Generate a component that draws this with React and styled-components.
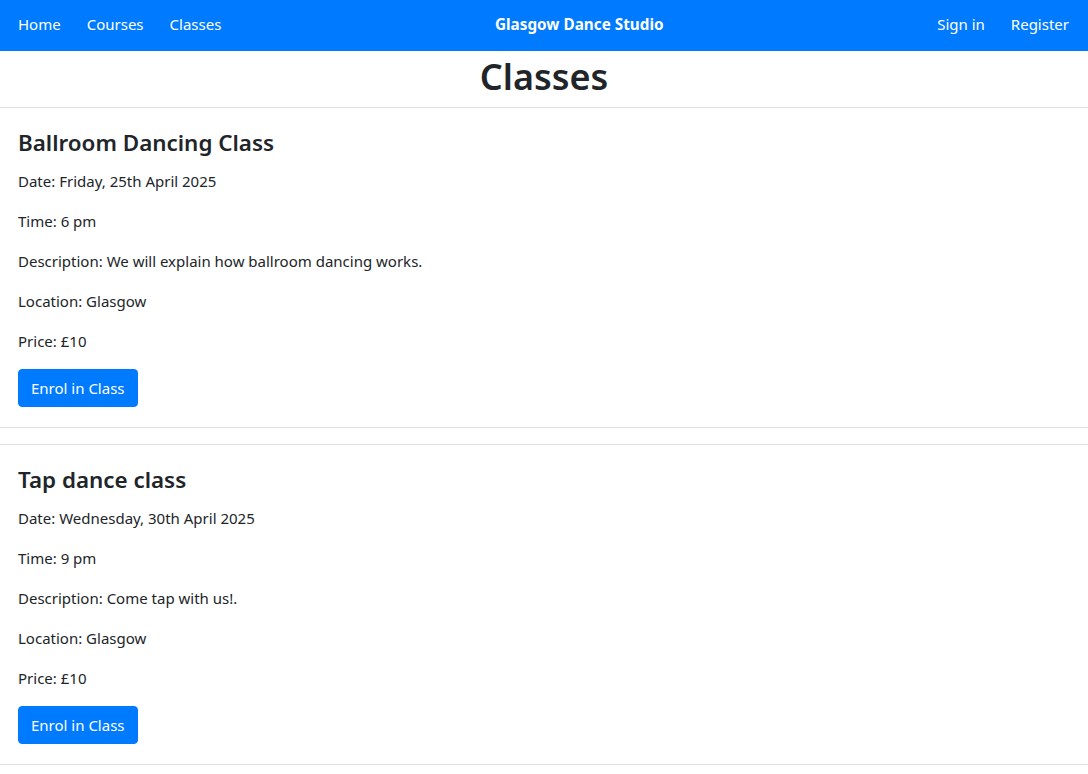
import React from 'react';
import styled, { createGlobalStyle } from 'styled-components';

const GlobalStyle = createGlobalStyle`
  body {
    margin: 0;
    font-family: "Segoe UI", "Noto Sans", "Liberation Sans", sans-serif;
    font-size: 15px;
    line-height: 24px;
    color: #212529;
    background: #fff;
  }
  * { box-sizing: border-box; }
`;

const Navbar = styled.nav`
  height: 51px;
  background-color: #007bff;
  display: flex;
  align-items: center;
  justify-content: space-between;
  padding: 0 11px 3px 10px;
`;

const NavGroup = styled.div`
  display: flex;
  align-items: center;
  gap: 10px;
`;

const NavLink = styled.a`
  color: #fff;
  text-decoration: none;
  padding: 8px 8px;
  font-size: 15px;
  cursor: pointer;
`;

const Brand = styled.a`
  color: #fff;
  font-weight: 700;
  font-size: 15.3px;
  text-decoration: none;
`;

const Title = styled.h1`
  margin: 0;
  padding: 2px 0 6px;
  text-align: center;
  font-size: 36px;
  font-weight: 600;
  line-height: 48px;
`;

const ClassCard = styled.section`
  border-top: 1px solid #dee2e6;
  border-bottom: 1px solid #dee2e6;
  padding: 21px 18px 20px;
  margin-bottom: 16px;
`;

const ClassName = styled.h3`
  margin: 0 0 11px;
  font-size: 22.4px;
  font-weight: 600;
  line-height: 28.8px;
`;

const Detail = styled.p`
  margin: 0 0 16px;
`;

const Button = styled.button`
  font-family: inherit;
  font-size: 15px;
  line-height: 24px;
  padding: 6px 12px;
  color: #fff;
  background-color: #007bff;
  border: 1px solid #007bff;
  border-radius: 4px;
  cursor: pointer;
`;

const classes = [
  {
    name: 'Ballroom Dancing Class',
    date: 'Friday, 25th April 2025',
    time: '6 pm',
    description: 'We will explain how ballroom dancing works.',
    location: 'Glasgow',
    price: '£10',
  },
  {
    name: 'Tap dance class',
    date: 'Wednesday, 30th April 2025',
    time: '9 pm',
    description: 'Come tap with us!.',
    location: 'Glasgow',
    price: '£10',
  },
];

export default function App() {
  return (
    <>
      <GlobalStyle />
      <Navbar>
        <NavGroup>
          <NavLink>Home</NavLink>
          <NavLink>Courses</NavLink>
          <NavLink>Classes</NavLink>
        </NavGroup>
        <Brand>Glasgow Dance Studio</Brand>
        <NavGroup>
          <NavLink>Sign in</NavLink>
          <NavLink>Register</NavLink>
        </NavGroup>
      </Navbar>
      <Title>Classes</Title>
      {classes.map((c) => (
        <ClassCard key={c.name}>
          <ClassName>{c.name}</ClassName>
          <Detail>Date: {c.date}</Detail>
          <Detail>Time: {c.time}</Detail>
          <Detail>Description: {c.description}</Detail>
          <Detail>Location: {c.location}</Detail>
          <Detail>Price: {c.price}</Detail>
          <Button>Enrol in Class</Button>
        </ClassCard>
      ))}
    </>
  );
}
